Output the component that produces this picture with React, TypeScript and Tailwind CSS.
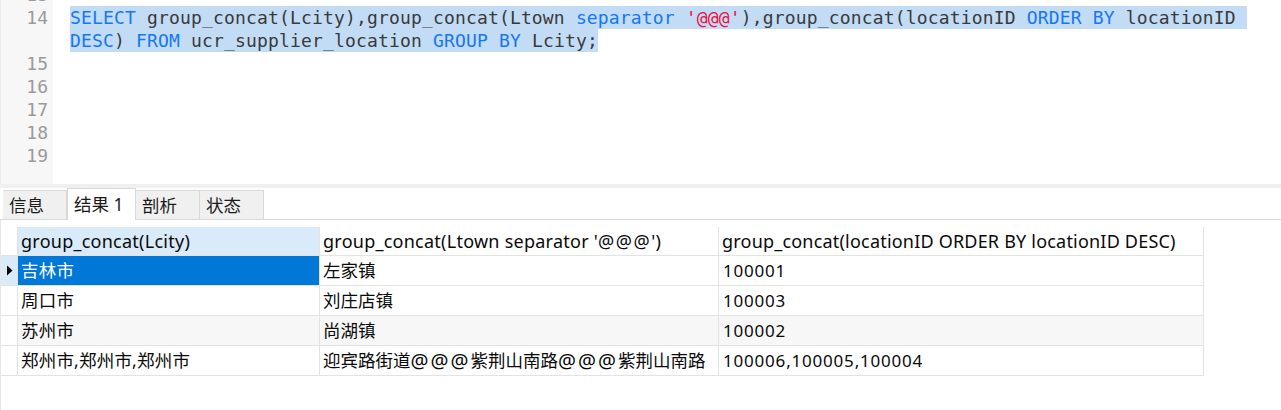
import React from "react";

const mono = { fontFamily: '"DejaVu Sans Mono", "Liberation Mono", monospace' };
const ui = { fontFamily: '"Noto Sans", "Noto Sans CJK SC", sans-serif' };

const K = ({ children }: { children: React.ReactNode }) => (
  <span className="text-[#1677f2]">{children}</span>
);
const S = ({ children }: { children: React.ReactNode }) => (
  <span className="text-[#ee1144]">{children}</span>
);
const At = () => <span className="text-[20px] leading-none tracking-[2px]">@@@</span>;

function Editor() {
  const nums = ["13", "14", "", "15", "16", "17", "18", "19"];
  return (
    <div className="flex h-[184px] overflow-hidden bg-white" style={mono}>
      <div className="w-[53px] shrink-0 bg-[#f7f7f7] border-l border-[#ececec]">
        <div className="-mt-[17px] flex flex-col">
          {nums.map((n, i) => (
            <div
              key={i}
              className="h-[23px] leading-[23px] text-right pr-[5px] text-[18px] text-[#9a9a9a]"
            >
              {n}
            </div>
          ))}
        </div>
      </div>
      <div className="flex-1 pl-[17px]">
        <div className="-mt-[17px] flex flex-col text-[18px] tracking-[0.16px] text-[#3a3a3a] whitespace-pre">
          <div className="h-[23px]" />
          <div className="h-[23px] leading-[23px]">
            <span className="bg-[#c2dcf6] inline-block h-[23px]">
              <K>SELECT</K> group_concat(Lcity),group_concat(Ltown <K>separator</K>{" "}
              <S>'@@@'</S>),group_concat(locationID <K>ORDER</K> <K>BY</K> locationID{" "}
            </span>
          </div>
          <div className="h-[23px] leading-[23px]">
            <span className="bg-[#c2dcf6] inline-block h-[23px]">
              <K>DESC</K>) <K>FROM</K> ucr_supplier_location <K>GROUP</K> <K>BY</K> Lcity;
            </span>
          </div>
        </div>
      </div>
    </div>
  );
}

function Tabs() {
  const tabs = [
    { label: "信息", active: false, w: "w-[64px]" },
    { label: "结果 1", active: true, w: "w-[69px]" },
    { label: "剖析", active: false, w: "w-[64px]" },
    { label: "状态", active: false, w: "w-[64px]" },
  ];
  return (
    <div className="flex items-end h-[32px] border-b border-[#d9d9d9] pl-[3px] bg-white" style={ui}>
      {tabs.map((t) => (
        <div
          key={t.label}
          className={
            t.active
              ? `${t.w} h-[32px] -mb-px bg-white border-t border-l border-r border-[#d9d9d9] flex items-center pl-[6px] text-[17.5px] text-[#1a1a1a]`
              : `${t.w} h-[29px] bg-[#f0f0f0] border-t border-r border-[#d9d9d9] flex items-center pl-[6px] text-[17.5px] text-[#1a1a1a]`
          }
        >
          {t.label}
        </div>
      ))}
    </div>
  );
}

function Grid() {
  const rows: React.ReactNode[][] = [
    ["吉林市", "左家镇", "100001"],
    ["周口市", "刘庄店镇", "100003"],
    ["苏州市", "尚湖镇", "100002"],
    [
      "郑州市,郑州市,郑州市",
      <>
        迎宾路街道<At />紫荆山南路<At />紫荆山南路
      </>,
      "100006,100005,100004",
    ],
  ];
  const headers: React.ReactNode[] = [
    "group_concat(Lcity)",
    <>
      group_concat(Ltown separator '<span className="tracking-[1.5px]">@@@</span>')
    </>,
    "group_concat(locationID ORDER BY locationID DESC)",
  ];
  return (
    <div className="pt-[7px]" style={ui}>
      <div className="grid grid-cols-[17px_302px_399px_485px] text-[#0a0a0a]">
        <div className="h-[29px] border-r border-b border-[#e3e3e3]" />
        {headers.map((h, i) => (
          <div
            key={i}
            className={`h-[29px] border-r border-b border-[#e3e3e3] pl-[3px] flex items-center whitespace-nowrap overflow-hidden text-[18px] ${
              i === 2 ? "tracking-[0.2px]" : "tracking-[0.25px]"
            } ${i === 0 ? "bg-[#d9eaf8]" : "bg-white"}`}
          >
            {h}
          </div>
        ))}
        {rows.map((r, ri) => (
          <React.Fragment key={ri}>
            <div
              className={`h-[30px] border-r border-b border-[#e3e3e3] flex items-center justify-center ${
                ri === 0 ? "bg-[#d9eaf8]" : "bg-white"
              }`}
            >
              {ri === 0 && (
                <svg width="7" height="11" viewBox="0 0 7 11">
                  <path d="M1 0.5 L6.5 5.5 L1 10.5 Z" fill="#000" />
                </svg>
              )}
            </div>
            {r.map((c, ci) => (
              <div
                key={ci}
                className={`h-[30px] border-r border-b border-[#e3e3e3] pl-[3px] flex items-center whitespace-nowrap overflow-hidden ${
                  ci === 2 ? "text-[17px] tracking-[0.8px] pl-[4px]" : ci === 0 ? "text-[17.5px] tracking-[0.2px]" : "text-[17.5px]"
                } ${
                  ri === 0 && ci === 0
                    ? "bg-[#0078d7] text-white"
                    : ri === 2
                    ? "bg-[#f7f7f7]"
                    : "bg-white"
                }`}
              >
                {c}
              </div>
            ))}
          </React.Fragment>
        ))}
      </div>
    </div>
  );
}

export default function App() {
  return (
    <div className="w-[1281px] h-[410px] bg-white overflow-hidden">
      <Editor />
      <div className="h-[4px] bg-[#f0f0f0]" />
      <Tabs />
      <div className="border-l border-[#e6e6e6] h-[190px]">
        <Grid />
      </div>
    </div>
  );
}
